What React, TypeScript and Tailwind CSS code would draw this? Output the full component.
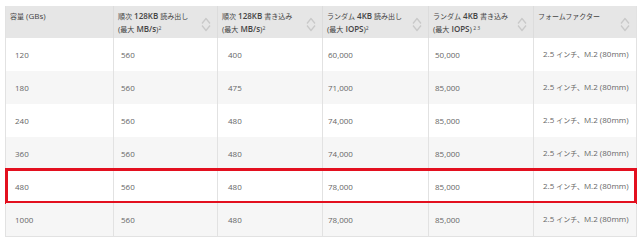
import React from "react";

type Row = {
  capacity: string;
  read: string;
  write: string;
  randRead: string;
  randWrite: string;
};

const rows: Row[] = [
  { capacity: "120", read: "560", write: "400", randRead: "60,000", randWrite: "50,000" },
  { capacity: "180", read: "560", write: "475", randRead: "71,000", randWrite: "85,000" },
  { capacity: "240", read: "560", write: "480", randRead: "74,000", randWrite: "85,000" },
  { capacity: "360", read: "560", write: "480", randRead: "74,000", randWrite: "85,000" },
  { capacity: "480", read: "560", write: "480", randRead: "78,000", randWrite: "85,000" },
  { capacity: "1000", read: "560", write: "480", randRead: "78,000", randWrite: "85,000" },
];

// per-column left padding of body cells
const bodyPad = ["pl-[9px]", "pl-[7px]", "pl-[10px]", "pl-[5px]", "pl-[6px]", "pl-[9px]"];

// Japanese runs are set a little smaller than the latin text
function J({ children }: { children: React.ReactNode }) {
  return <span className="text-[7px]">{children}</span>;
}

function SortIcon() {
  return (
    <svg width="10" height="15" viewBox="0 0 10 15" fill="none" className="shrink-0">
      <path d="M1 6.5 L5 1.5 L9 6.5" stroke="#c9c9c9" strokeWidth="1.3" strokeLinejoin="round" />
      <path d="M1 8.5 L5 13.5 L9 8.5" stroke="#c9c9c9" strokeWidth="1.3" strokeLinejoin="round" />
    </svg>
  );
}

function HeadCell({ children, sort = true, first = false }: { children: React.ReactNode; sort?: boolean; first?: boolean }) {
  return (
    <div className={`flex items-start justify-between pl-[4px] pr-[6px] pt-[4px] ${first ? "" : "border-l border-[#dcdcdc]"}`}>
      <div className="leading-[12px] text-[#444]">{children}</div>
      {sort && (
        <div className="self-center">
          <SortIcon />
        </div>
      )}
    </div>
  );
}

function FormFactor() {
  return (
    <>
      2.5 <J>インチ、</J>M.2 (80mm)
    </>
  );
}

export default function App() {
  return (
    <div
      className="w-[642px] h-[246px] bg-white pt-[6px] pl-[5px] text-[8px]"
      style={{ fontFamily: '"Open Sans", "Noto Sans CJK JP", sans-serif' }}
    >
      <div className="w-[632px] border-x border-b border-[#e2e2e2]">
        <div className="grid grid-cols-[107px_104px_105px_106px_105px_103px] h-[32px] bg-[#e6e6e6]">
          <HeadCell sort={false} first>
            <J>容量</J> (GBs)
          </HeadCell>
          <HeadCell>
            <J>順次</J> <b className="font-semibold">128KB</b> <J>読み出し</J>
            <br />
            (<J>最大</J> <b className="font-semibold">MB/s</b>)<sup className="text-[5px]">2</sup>
          </HeadCell>
          <HeadCell>
            <J>順次</J> <b className="font-semibold">128KB</b> <J>書き込み</J>
            <br />
            (<J>最大</J> <b className="font-semibold">MB/s</b>)<sup className="text-[5px]">2</sup>
          </HeadCell>
          <HeadCell>
            <J>ランダム</J> <b className="font-semibold">4KB</b> <J>読み出し</J>
            <br />
            (<J>最大</J> <b className="font-semibold">IOPS</b>)<sup className="text-[5px]">2</sup>
          </HeadCell>
          <HeadCell>
            <J>ランダム</J> <b className="font-semibold">4KB</b> <J>書き込み</J>
            <br />
            (<J>最大</J> <b className="font-semibold">IOPS</b>)<sup className="text-[5px]"> 2 3</sup>
          </HeadCell>
          <HeadCell>
            <J>フォームファクター</J>
          </HeadCell>
        </div>

        {rows.map((row, i) => {
          const cells: React.ReactNode[] = [row.capacity, row.read, row.write, row.randRead, row.randWrite, <FormFactor />];
          return (
            <div
              key={row.capacity}
              className={`relative grid grid-cols-[107px_104px_105px_106px_105px_103px] h-[33px] ${i % 2 === 1 ? "bg-[#f6f6f6]" : "bg-white"}`}
            >
              {cells.map((c, j) => (
                <div
                  key={j}
                  className={`flex items-center whitespace-nowrap text-[#666] ${bodyPad[j]} ${j === 0 ? "" : "border-l border-[#e2e2e2]"}`}
                >
                  <span>{c}</span>
                </div>
              ))}
              {row.capacity === "480" && (
                <div className="absolute -top-[2px] -bottom-[1px] -left-[1px] -right-[1px] border-[3px] border-[#e3101f] pointer-events-none" />
              )}
            </div>
          );
        })}
      </div>
    </div>
  );
}
